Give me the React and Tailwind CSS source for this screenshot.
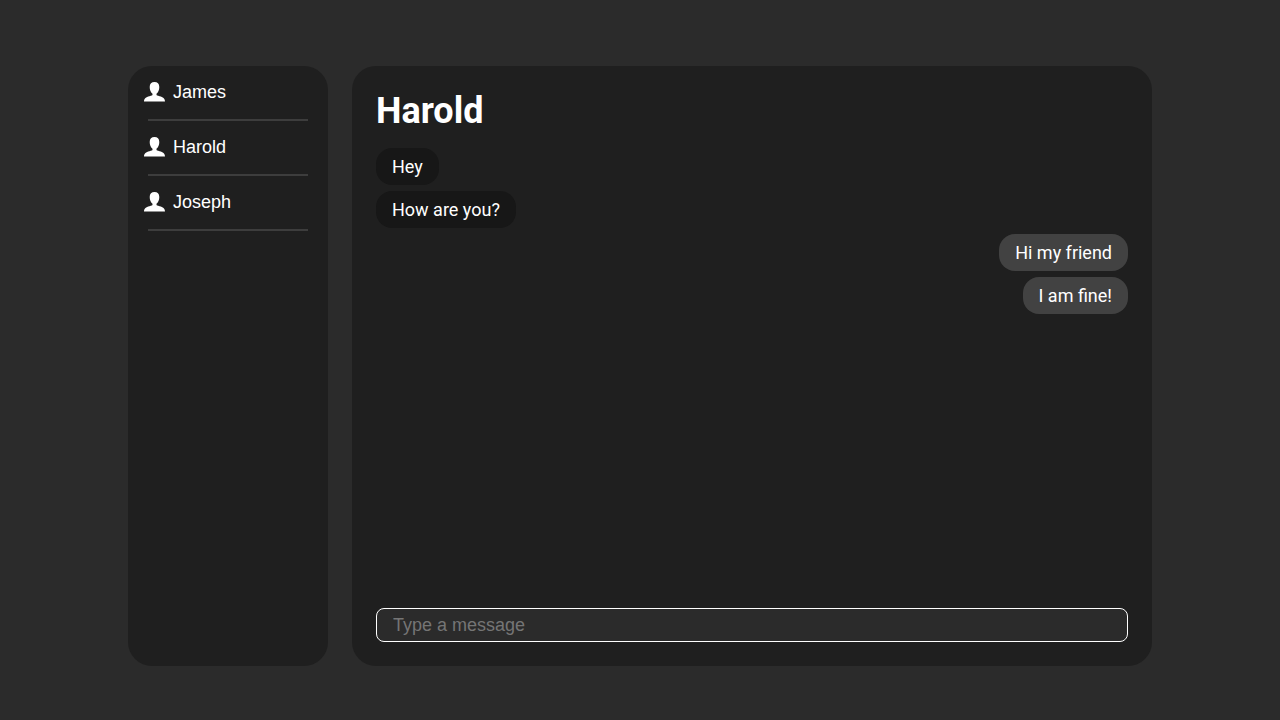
const contacts = ["James", "Harold", "Joseph"];

const messages = [
  { text: "Hey", mine: false },
  { text: "How are you?", mine: false },
  { text: "Hi my friend", mine: true },
  { text: "I am fine!", mine: true },
];

function PersonIcon() {
  return (
    <svg width="21" height="20" viewBox="0 0 21 20" fill="currentColor" aria-hidden="true">
      <path d="M10.5 0C13.5 0 15.3 1.6 15.3 5C15.3 7.8 14.4 10.2 12.5 11.8V12.8C12.5 13.4 13.5 13.7 15.6 14.2C18.9 15 21 16.2 21 19.6H0C0 16.2 2.1 15 5.4 14.2C7.5 13.7 8.5 13.4 8.5 12.8V11.8C6.6 10.2 5.7 7.8 5.7 5C5.7 1.6 7.5 0 10.5 0Z" />
    </svg>
  );
}

function Contact({ name }) {
  return (
    <li>
      <button className="flex h-[53px] w-full items-center gap-2 px-4 pb-0.5 text-left font-['Liberation_Sans',sans-serif] text-lg text-white">
        <PersonIcon />
        <span>{name}</span>
      </button>
      <div className="mx-5 h-0.5 bg-[#3d3d3d]" />
    </li>
  );
}

function Message({ text, mine }) {
  return (
    <div
      className={
        mine
          ? "self-end rounded-2xl bg-[#424242] py-2 pr-4 pl-[15.9px] text-lg leading-[21px]"
          : "self-start rounded-2xl bg-[#171717] px-4 py-2 text-lg leading-[21px]"
      }
    >
      {text}
    </div>
  );
}

export default function App() {
  return (
    <div className="flex h-screen justify-center gap-6 bg-[#2b2b2b] pt-[66px] font-[Roboto,sans-serif] text-white">
      <aside className="h-[600px] w-[200px] rounded-3xl bg-[#1f1f1f]">
        <ul>
          {contacts.map((name) => (
            <Contact key={name} name={name} />
          ))}
        </ul>
      </aside>
      <main className="flex h-[600px] w-[800px] flex-col rounded-3xl bg-[#1f1f1f] p-6">
        <h1 className="text-4xl leading-[42px] font-bold">Harold</h1>
        <div className="mt-4 flex grow flex-col gap-1.5">
          {messages.map((message) => (
            <Message key={message.text} {...message} />
          ))}
        </div>
        <input
          type="text"
          placeholder="Type a message"
          className="h-[34px] w-full rounded-lg border border-white bg-[#2b2b2b] px-4 font-['Liberation_Sans',sans-serif] text-lg text-white outline-none placeholder:text-[#757575]"
        />
      </main>
    </div>
  );
}
